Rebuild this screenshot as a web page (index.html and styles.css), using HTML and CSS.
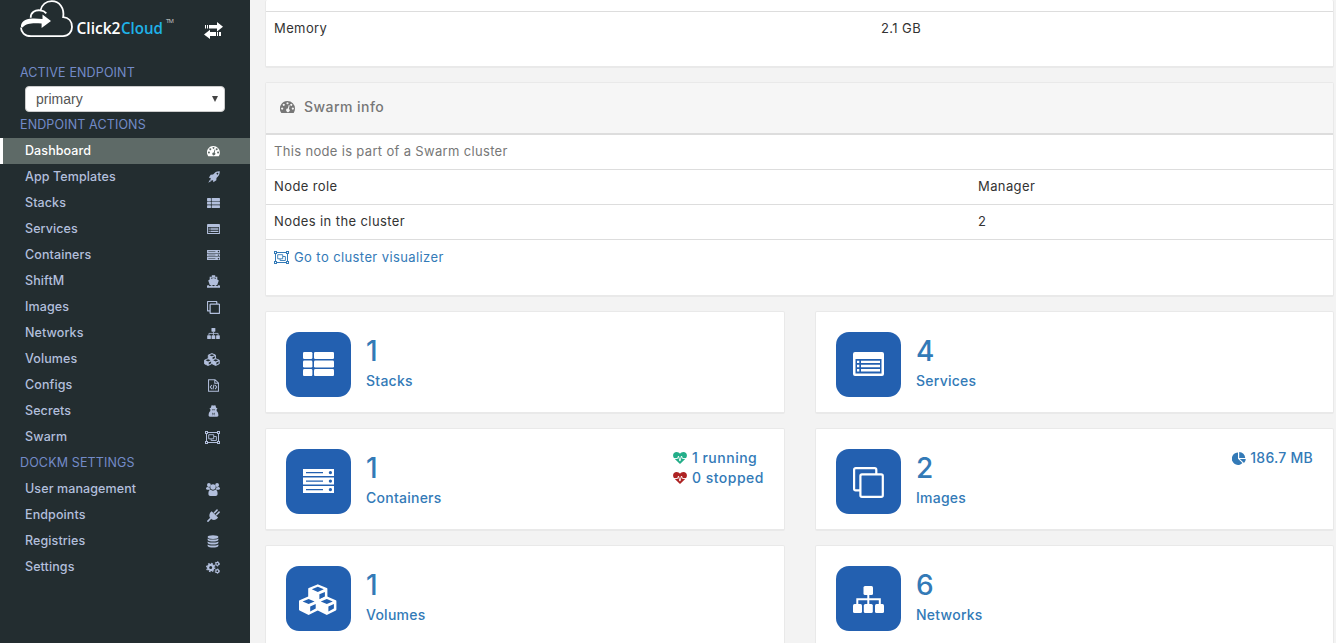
FILE: index.html
```
<!DOCTYPE html>
<html lang="en">
<head>
<meta charset="utf-8">
<title>Dashboard</title>
<link rel="stylesheet" href="styles.css">
</head>
<body>
<svg class="defs" width="0" height="0" aria-hidden="true">
  <symbol id="list" viewBox="0 0 31 24"><g fill="currentColor"><rect width="9.4" height="7" rx="1.3"/><rect x="11" width="20" height="7" rx="1.3"/><rect y="8.6" width="9.4" height="7" rx="1.3"/><rect x="11" y="8.6" width="20" height="7" rx="1.3"/><rect y="17.1" width="9.4" height="7" rx="1.3"/><rect x="11" y="17.1" width="20" height="7" rx="1.3"/></g></symbol>
  <symbol id="window" viewBox="0 0 31 24"><path fill="currentColor" fill-rule="evenodd" d="M2 0h27a2 2 0 0 1 2 2v20a2 2 0 0 1-2 2H2a2 2 0 0 1-2-2V2a2 2 0 0 1 2-2zM2.5 7v14.4h26V7z"/><path fill="currentColor" d="M4 8.7h2.3v2.4H4zm4 0h19v2.4H8zM4 12.8h2.3v2.4H4zm4 0h19v2.4H8zM4 17h2.3v2.4H4zm4 0h19v2.4H8z"/></symbol>
  <symbol id="server" viewBox="0 0 31 24"><path fill="currentColor" fill-rule="evenodd" d="M0 0h31v7H0zM3 2.9v1.4h17V2.9zM27.4 2a1.6 1.6 0 1 0 .01 0zM0 8.5h31v7H0zM3 11.4v1.4h17v-1.4zM27.4 10.5a1.6 1.6 0 1 0 .01 0zM0 17h31v7H0zM3 19.9v1.4h17v-1.4zM27.4 19a1.6 1.6 0 1 0 .01 0z"/></symbol>
  <symbol id="clone" viewBox="0 0 31 31"><g class="clone-lines" fill="none" stroke="currentColor"><rect x="7.4" y="7.4" width="22.4" height="22.4" rx="1.6"/><path d="M7 23.4H2.7a1.6 1.6 0 0 1-1.6-1.6V2.7a1.6 1.6 0 0 1 1.6-1.6h19a1.6 1.6 0 0 1 1.6 1.6V7"/></g></symbol>
  <symbol id="cubes" viewBox="0 0 38 31"><defs><g id="cube"><path fill="currentColor" stroke="currentColor" stroke-width="2" stroke-linejoin="round" d="M9.6 1.3L18.2 5v8.4l-8.6 4.3L1 13.4V5z"/><path class="hole" d="M9.6 2.7L15.6 5.300l-6 2.600l-6-2.600zM11.200 10.300l5.500-2.400v4.500l-5.500 2.800z"/></g></defs><use href="#cube" x="9.200"/><use href="#cube" y="12.200"/><use href="#cube" x="18.200" y="12.200"/></symbol>
  <symbol id="sitemap" viewBox="0 0 31 27"><g fill="currentColor"><rect x="10.500" width="9.500" height="9" rx="1.500"/><rect y="18" width="9" height="9" rx="1.500"/><rect x="10.800" y="18" width="9" height="9" rx="1.500"/><rect x="22" y="18" width="9" height="9" rx="1.500"/></g><path fill="none" stroke="currentColor" stroke-width="2" d="M4.300 18v-4.700h22.500V18M15.300 9v9"/></symbol>
  <symbol id="gauge" viewBox="0 0 14 12"><path fill="currentColor" fill-rule="evenodd" d="M7 0a7 7 0 0 1 7 7c0 1.500-.4 2.800-1.100 3.900-.1.100-.2.200-.4.200h-11c-.2 0-.3-.1-.4-.2A7 7 0 0 1 7 0zM2 6a1 1 0 1 0 .01 0zM3.500 2.500a1 1 0 1 0 .01 0zM7 1a1 1 0 1 0 .01 0zM10.500 2.500a1 1 0 1 0 .01 0zM12 6a1 1 0 1 0 .01 0zM8.200 3.700L7.300 7A1.600 1.600 0 1 0 8.300 7.300L9 4z"/></symbol>
  <symbol id="rocket" viewBox="0 0 14 14"><path fill="currentColor" fill-rule="evenodd" d="M13.700.3C10 .1 8.200 1.500 5.900 4.100L3.100 4.300 1 7.800l2.400.3c-.4.700-.7 1.300-.8 1.700l1.600 1.600 1.700-.8.300 2.400 3.500-2.100.2-2.800C12.500 5.800 13.900 4 13.700.3zM11 2a1 1 0 1 1-.01 0z"/><path fill="currentColor" d="M2.300 10.100L.3 13.700l3.600-2z"/></symbol>
  <symbol id="ship" viewBox="0 0 14 14"><path fill="currentColor" d="M5.200.3h3.600v1.500h2.300v3l1.600 1.100-1.700 5H3L1.300 5.900l1.600-1.100v-3h2.300z"/><path class="ship-gap" d="M4.300 3h5.400v1.100L7 3.200l-2.700.9z"/><path fill="currentColor" d="M0 13.800v-2.200l1.200-.8 1.800 1.200 2-1.200 2 1.200 2-1.200 2 1.200 1.800-1.200 1.200.8v2.200z"/></symbol>
  <symbol id="file" viewBox="0 0 12 14"><path fill="none" stroke="currentColor" stroke-width="1.100" d="M.6.600h7l3.800 3.600v9.200H.6zM7.400.600v3.900h3.900M4.200 6.500L2.500 8.700l1.700 2.200M7.800 6.500l1.700 2.200-1.700 2.200M6.600 6l-1.200 5.200"/></symbol>
  <symbol id="spy" viewBox="0 0 12 14"><path fill="currentColor" fill-rule="evenodd" d="M3.800.4C5 0 5.300.7 6 .7S7 0 8.200.4l.9 2.800 1.800.8-1.200.8c.1 1 .1 1.600-.1 2.200 1.500.8 2.100 2.700 2.100 5 0 1.200-.6 1.700-1.500 1.700H1.800C.9 13.700.3 13.200.3 12c0-2.300.6-4.200 2.100-5-.2-.6-.2-1.200-.1-2.200L1.100 4l1.800-.8zM4 5.200l.6.900h1L6 5.600l.4.500h1l.6-.9zM4.500 8.700L5.300 12.500l.5-2.500zM7.500 8.700L6.200 10l.5 2.500z"/></symbol>
  <symbol id="group" viewBox="0 0 15 13"><g fill="none" stroke="currentColor"><path d="M2 1.500h11M2 11.500h11M1.500 2v9M13.500 2v9"/><path stroke-width=".9" d="M3.700 3.700h5v4.100h-5zM9 5.500h2.400v4H6.100V8"/></g><path fill="currentColor" fill-rule="evenodd" d="M0 0h3v3H0zM1 1v1h1V1zM12 0h3v3h-3zM13 1v1h1V1zM0 10h3v3H0zM1 11v1h1v-1zM12 10h3v3h-3zM13 11v1h1v-1z"/></symbol>
  <symbol id="users" viewBox="0 0 14 13"><g fill="currentColor"><circle cx="2.900" cy="2" r="1.900"/><circle cx="11.100" cy="2" r="1.900"/><circle cx="7" cy="4" r="2.700"/><path d="M1.200 3.900l2.600.5c-.1 1.100.1 1.700.6 2.300H1.200C.4 6.700 0 6.300 0 5.600s.4-1.600 1.200-1.700zM12.800 3.900l-2.600.5c.1 1.100-.1 1.700-.6 2.300h3.200c.8 0 1.200-.4 1.200-1.100s-.4-1.600-1.200-1.700zM4.400 6.800c1.500 1.100 3.700 1.100 5.200 0 1.500.2 2 1.900 2 3.900 0 1.500-.8 2.200-2 2.200H4.400c-1.200 0-2-.7-2-2.200 0-2 .5-3.700 2-3.900z"/></g></symbol>
  <symbol id="plug" viewBox="0 0 14 14"><path fill="none" stroke="currentColor" stroke-width="1.700" stroke-linecap="round" d="M8 4l2.800-2.800M10.200 6.200l2.800-2.800M4 10L1 13"/><path fill="currentColor" d="M5 2.300l6.900 6.900c-1.500 2.300-4.200 3.100-6.600 2.100L2.900 8.900C1.900 6.500 2.800 3.800 5 2.300z"/></symbol>
  <symbol id="database" viewBox="0 0 12 14"><g fill="currentColor"><ellipse cx="6" cy="2.200" rx="5.800" ry="2"/><path d="M.2 3.700c2.500 1.700 9.100 1.700 11.600 0v1.700c-1.500 2.200-10.100 2.200-11.600 0zM.2 6.900c2.500 1.700 9.100 1.700 11.600 0v1.700c-1.500 2.200-10.100 2.200-11.600 0zM.2 10.100c2.500 1.700 9.100 1.700 11.600 0v1.700c-1.500 2.300-10.100 2.300-11.600 0z"/></g></symbol>
  <symbol id="gears" viewBox="0 0 14 13"><g fill="none" stroke="currentColor"><circle cx="4.700" cy="6.500" r="2.600" stroke-width="2.200"/><circle cx="4.700" cy="6.500" r="4.100" stroke-width="1.200" stroke-dasharray="1.600 1.620"/><circle cx="11.300" cy="2.800" r="1.500" stroke-width="1.200"/><circle cx="11.300" cy="10.200" r="1.500" stroke-width="1.200"/><circle cx="11.300" cy="2.800" r="2.300" stroke-width=".8" stroke-dasharray="1.200 1.210"/><circle cx="11.300" cy="10.200" r="2.300" stroke-width=".8" stroke-dasharray="1.200 1.210"/></g></symbol>
  <symbol id="heart" viewBox="0 0 14 12"><path fill="currentColor" d="M7 12L1.300 6.400C-1.200 3.600.4 0 3.600 0 5.200 0 6.300.8 7 1.700 7.700.8 8.800 0 10.400 0c3.200 0 4.800 3.600 2.300 6.400z"/><path fill="none" stroke="#fff" stroke-width=".9" d="M.8 6.500h3.700l1-2.400 1.400 5L8.500 4l1 2.500h3.700"/></symbol>
  <symbol id="pie" viewBox="0 0 14 13"><path fill="currentColor" d="M6 .5v6.200l4.400 4.400A6.200 6.200 0 1 1 6 .5zM7.200 0a6.200 6.200 0 0 1 6 6h-6zM7.800 7h6a6 6 0 0 1-1.800 4.100z"/></symbol>
</svg>

<div class="page">
  <aside class="sidebar">
    <header class="brand">
      <svg class="logo" width="160" height="40" viewBox="0 0 160 40">
        <path class="cloud-line" d="M11 36.200h32c5.500 0 9-4.200 9-9.300 0-5.500-3.400-9.400-8.800-9.700C44.500 7.800 39.500 1.200 31.800 1.200c-5.800 0-10 3.800-11.300 9.200-5.500-.8-9.800 2-9.800 7.300"/>
        <path class="cloud-line" d="M20.500 10.400c2.500.3 4.300 1.300 5.800 3"/>
        <path class="cloud-line" d="M11 36.200C4.500 36.200 1 32 1 27.500"/>
        <path class="cloud-arrow" d="M1 27c-.5-5.500 5-9.300 13-8.500l8.500.4v-4.500L31 21l-9.400 7v-4.500C14 23.200 7 22.500 2.600 27.500z"/>
        <text class="logo-word" x="56.500" y="33.500" textLength="44" lengthAdjust="spacingAndGlyphs">Click2</text>
        <text class="logo-word logo-accent" x="101" y="33.500" textLength="42" lengthAdjust="spacingAndGlyphs">Cloud</text>
        <text class="logo-tm" x="146" y="22.500" textLength="8">TM</text>
      </svg>
      <svg class="toggle" width="19" height="17" viewBox="0 0 19 17"><path fill="#fff" d="M5 3h8V0l6 4.800-6 4.700V6.600H5zM3 3h1v3.600H3zM1 3h1v3.600H1zM12 10h-6V7.800L0 12.400 6 17v-3h6zM13 10h1v4h-1zM15 10h2v4h-2z"/></svg>
    </header>
    <h2 class="side-title title-active">ACTIVE ENDPOINT</h2>
    <div class="select"><span>primary</span><span class="caret"></span></div>
    <h2 class="side-title">ENDPOINT ACTIONS</h2>
    <nav>
      <a class="item current"><span>Dashboard</span><svg width="13" height="11"><use href="#gauge"/></svg></a>
      <a class="item"><span>App Templates</span><svg width="12" height="12"><use href="#rocket"/></svg></a>
      <a class="item"><span>Stacks</span><svg width="13" height="10"><use href="#list"/></svg></a>
      <a class="item"><span>Services</span><svg width="13" height="10"><use href="#window"/></svg></a>
      <a class="item"><span>Containers</span><svg width="13" height="10"><use href="#server"/></svg></a>
      <a class="item"><span>ShiftM</span><svg width="13" height="13"><use href="#ship"/></svg></a>
      <a class="item"><span>Images</span><svg width="13" height="13"><use href="#clone"/></svg></a>
      <a class="item"><span>Networks</span><svg width="13" height="11"><use href="#sitemap"/></svg></a>
      <a class="item"><span>Volumes</span><svg width="16" height="13"><use href="#cubes"/></svg></a>
      <a class="item"><span>Configs</span><svg class="narrow" width="11" height="13"><use href="#file"/></svg></a>
      <a class="item"><span>Secrets</span><svg class="narrow" width="11" height="12"><use href="#spy"/></svg></a>
      <a class="item"><span>Swarm</span><svg width="15" height="13"><use href="#group"/></svg></a>
    </nav>
    <h2 class="side-title">DOCKM SETTINGS</h2>
    <nav>
      <a class="item"><span>User management</span><svg width="14" height="13"><use href="#users"/></svg></a>
      <a class="item"><span>Endpoints</span><svg width="13" height="13"><use href="#plug"/></svg></a>
      <a class="item"><span>Registries</span><svg class="narrow" width="12" height="13"><use href="#database"/></svg></a>
      <a class="item"><span>Settings</span><svg width="14" height="13"><use href="#gears"/></svg></a>
    </nav>
  </aside>

  <main class="content">
    <section class="widget node-info">
      <div class="row memory"><span>Memory</span><span>2.1 GB</span></div>
    </section>
    <section class="widget swarm-info">
      <h3 class="widget-head"><svg width="15" height="13"><use href="#gauge"/></svg><span>Swarm info</span></h3>
      <div class="row muted"><span>This node is part of a Swarm cluster</span></div>
      <div class="row"><span>Node role</span><span>Manager</span></div>
      <div class="row"><span>Nodes in the cluster</span><span>2</span></div>
      <div class="row last"><a class="link"><svg width="15" height="13"><use href="#group"/></svg><span>Go to cluster visualizer</span></a></div>
    </section>
    <section class="cards">
      <a class="widget card"><span class="tile"><svg width="31" height="24"><use href="#list"/></svg></span><span class="figures"><b>1</b><span>Stacks</span></span></a>
      <a class="widget card"><span class="tile"><svg width="31" height="24"><use href="#window"/></svg></span><span class="figures"><b>4</b><span>Services</span></span></a>
      <a class="widget card"><span class="tile"><svg width="31" height="24"><use href="#server"/></svg></span><span class="figures"><b>1</b><span>Containers</span></span>
        <span class="extra"><span class="stat"><svg class="ok" width="14" height="12"><use href="#heart"/></svg>1 running</span><span class="stat"><svg class="bad" width="14" height="12"><use href="#heart"/></svg>0 stopped</span></span></a>
      <a class="widget card"><span class="tile tile-clone"><svg width="31" height="31"><use href="#clone"/></svg></span><span class="figures"><b>2</b><span>Images</span></span>
        <span class="extra"><span class="stat size"><svg width="14" height="13"><use href="#pie"/></svg>186.7 MB</span></span></a>
      <a class="widget card"><span class="tile tile-cubes"><svg width="38" height="31"><use href="#cubes"/></svg></span><span class="figures"><b>1</b><span>Volumes</span></span></a>
      <a class="widget card"><span class="tile tile-map"><svg width="31" height="27"><use href="#sitemap"/></svg></span><span class="figures"><b>6</b><span>Networks</span></span></a>
    </section>
  </main>
</div>
</body>
</html>
```
FILE: styles.css
```
* { box-sizing: border-box; }
body { margin: 0; background: #f3f3f3; color: #333; font: 13px/20px Inter, "Open Sans", sans-serif; overflow: hidden; }
.defs { display: block; position: absolute; }
svg { flex: none; }
.page { display: flex; height: 643px; }

.sidebar { --line: 3px; width: 250px; flex: none; background: #232d30; }
.brand { display: flex; height: 62px; padding-left: 20px; align-items: flex-start; }
.toggle { margin: 22px 0 0 24px; }
.cloud-line { fill: none; stroke: #fff; stroke-width: 1.8; }
.cloud-arrow { fill: #fff; }
.logo-word { font: 600 16px "Open Sans", sans-serif; fill: #fff; }
.logo-accent { fill: #1fb2e8; }
.logo-tm { font: 6px "Open Sans", sans-serif; fill: #ccc; }
.side-title { margin: 0; padding-left: 20px; height: 26px; font-size: 12.5px; line-height: 25px; font-weight: 400; letter-spacing: .14px; color: #738bc8; }
.title-active { height: 24px; line-height: 21px; }
.select { display: flex; align-items: center; justify-content: space-between; width: 200px; height: 26px; margin-left: 25px; padding: 0 6px 0 10px; background: #fff; border: 1px solid #ccc; border-radius: 4px; color: #555; font: 14px/24px "Liberation Sans", Arial, sans-serif; }
.caret { border: 3px solid transparent; border-top: 6px solid #444; border-bottom: 0; }
.item { display: flex; align-items: center; justify-content: space-between; height: 26px; padding: 0 30px 1px 25px; color: #b2bfdc; font-size: 12.5px; font-weight: 500; line-height: 24px; letter-spacing: .1px; }
.item svg { margin: 1px 0 0; }
.item svg.narrow { margin-right: 1px; }
.item.current { padding-left: 22px; border-left: 3px solid #fff; background: #5e6a67; color: #fff; }
.ship-gap { fill: #232d30; }
.hole { fill: var(--hole, #232d30); }
.clone-lines { stroke-width: var(--line, 2.2px); }

.content { flex: 1; min-width: 0; padding: 0 2px 0 15px; }
.widget { background: #fff; border: 1px solid #e9e9e9; border-bottom-width: 2px; border-radius: 2px; }
.node-info { height: 68px; padding-top: 11px; border-top: 0; margin-bottom: 14px; }
.swarm-info { height: 215px; margin-bottom: 14px; }
.widget-head { display: flex; align-items: center; gap: 9px; height: 52px; margin: 0; padding: 0 14px 2px; background: #f6f6f6; border-bottom: 2px solid #ddd; font-size: 14px; font-weight: 500; letter-spacing: .45px; color: #777; }
.row { display: flex; height: 35px; padding: 6px 8px; color: #333; border-top: 1px solid #ddd; letter-spacing: .4px; }
.row span:first-child { width: 704px; }
.row.muted { border-top: 0; height: 34px; color: #777; letter-spacing: .33px; }
.row.memory span:first-child { width: 607px; }
.row.last { padding-top: 7px; }
.link { display: flex; align-items: center; gap: 5px; color: #337ab7; height: 20px; }

.cards { display: grid; grid-template-columns: 520px 519px; column-gap: 30px; row-gap: 14px; }
.card { display: flex; height: 103px; padding: 20px; color: #337ab7; }
.tile { --hole: #2360b0; display: flex; align-items: center; justify-content: center; width: 65px; height: 65px; padding-bottom: 1px; border-radius: 13px; background: #2360b0; color: #fff; }
.tile-clone { padding: 2px 0 0; }
.tile-cubes { padding: 1px 2px 0 0; }
.tile-map { padding: 2px 1px 0 0; }
.figures { display: flex; flex-direction: column; margin-left: 15px; font-size: 14px; font-weight: 500; letter-spacing: .25px; }
.figures b { font-size: 28px; line-height: 39px; font-weight: 500; letter-spacing: 0; }
.figures > span { line-height: 20px; }
.extra { margin: -1px 0 0 auto; font-size: 14px; font-weight: 500; line-height: 20px; }
.stat { display: flex; align-items: center; gap: 5px; height: 20px; letter-spacing: .5px; }
.stat.size { gap: 4px; letter-spacing: .25px; }
.ok { color: #23ae89; }
.bad { color: #ae2323; }
```
